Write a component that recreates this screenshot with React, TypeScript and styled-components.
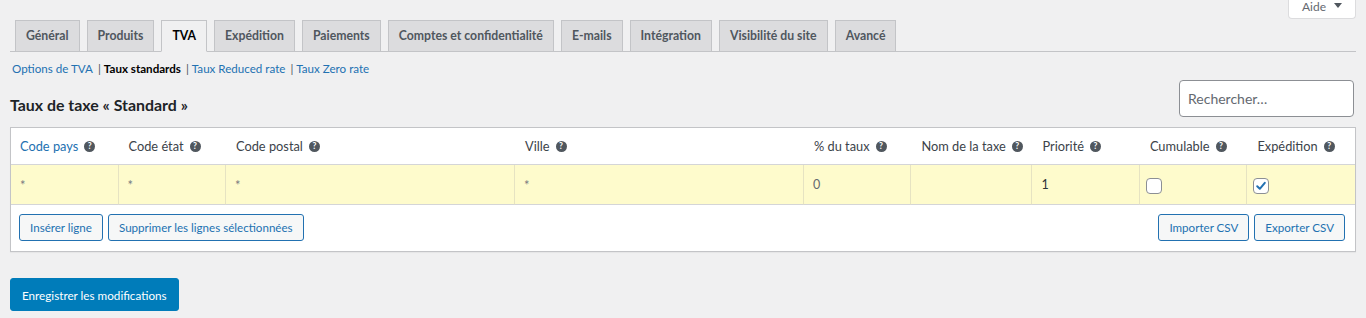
import React from "react";
import styled, { createGlobalStyle } from "styled-components";

const GlobalStyle = createGlobalStyle`
  html, body { margin: 0; padding: 0; background: #f0f0f1; }
  body {
    font-family: Lato, "Noto Sans", sans-serif;
    color: #3c434a;
    font-size: 12px;
  }
  * { box-sizing: border-box; }
`;

const FONT = `Lato, "Noto Sans", sans-serif`;

const Page = styled.div`
  display: flex;
  flex-direction: column;
  padding: 0 10px;
`;

const TopBar = styled.div`
  display: flex;
  justify-content: flex-end;
  height: 20px;
`;

const HelpButton = styled.button`
  display: flex;
  align-items: flex-start;
  justify-content: center;
  gap: 8px;
  width: 68px;
  height: 19px;
  padding: 0;
  background: #fff;
  border: 1px solid #dcdcde;
  border-top: none;
  border-radius: 0 0 4px 4px;
  font-family: ${FONT};
  font-size: 12px;
  line-height: 13px;
  color: #646970;
`;

const Caret = styled.span`
  display: block;
  width: 0;
  height: 0;
  margin-top: 3px;
  border-left: 4px solid transparent;
  border-right: 4px solid transparent;
  border-top: 5px solid #50575e;
`;

const TabBar = styled.nav`
  display: flex;
  align-items: flex-start;
  gap: 7px;
  height: 32px;
  padding-left: 5px;
  border-bottom: 1px solid #c3c4c7;
`;

const Tab = styled.a<{ $active?: boolean }>`
  display: block;
  height: ${(p) => (p.$active ? "32px" : "31px")};
  padding: 5px 10px;
  border: 1px solid #c3c4c7;
  border-bottom: ${(p) => (p.$active ? "1px solid #f0f0f1" : "none")};
  background: ${(p) => (p.$active ? "#f0f0f1" : "#dcdcde")};
  color: ${(p) => (p.$active ? "#000" : "#50575e")};
  font-size: 12.25px;
  font-weight: 700;
  line-height: 20px;
  white-space: nowrap;
  text-decoration: none;
  position: relative;
`;

const SubNav = styled.ul`
  display: flex;
  align-items: center;
  list-style: none;
  margin: 8px 0 0 2px;
  padding: 0;
  height: 18px;
  font-size: 11.6px;
  line-height: 18px;
`;

const SubItem = styled.li`
  display: flex;
  align-items: center;
`;

const SubLink = styled.a<{ $current?: boolean }>`
  color: ${(p) => (p.$current ? "#000" : "#2271b1")};
  font-weight: ${(p) => (p.$current ? 700 : 400)};
  text-decoration: none;
`;

const Sep = styled.span`
  margin: 0 3px 0 5px;
  color: #50575e;
`;

const HeadingRow = styled.div`
  display: flex;
  justify-content: space-between;
  align-items: flex-end;
  margin-top: 2px;
`;

const Title = styled.h2`
  margin: 0 0 2px 0;
  font-size: 15.9px;
  font-weight: 700;
  line-height: 20px;
  color: #1d2327;
`;

const Search = styled.input`
  width: 175px;
  height: 37px;
  margin-right: 2px;
  padding: 0 8px;
  border: 1px solid #8c8f94;
  border-radius: 4px;
  background: #fff;
  font-family: ${FONT};
  font-size: 14px;
  color: #2c3338;
  &::placeholder { color: #646970; }
`;

const Table = styled.table`
  width: 100%;
  margin-top: 10px;
  border-collapse: separate;
  border-spacing: 0;
  border: 1px solid #c3c4c7;
  background: #fff;
  table-layout: fixed;
  box-shadow: 0 1px 1px rgba(0, 0, 0, 0.04);
`;

const Th = styled.th<{ $link?: boolean }>`
  height: 37px;
  padding: 0 10px;
  text-align: left;
  font-weight: 400;
  font-size: 12.8px;
  white-space: nowrap;
  color: ${(p) => (p.$link ? "#2271b1" : "#3c434a")};
  border-bottom: 1px solid #d4d5d7;
  &:first-child { padding-left: 9px; }
`;

const HeadInner = styled.span`
  display: inline-flex;
  align-items: center;
  gap: 6px;
`;

const Help = styled.span`
  display: inline-flex;
  align-items: center;
  justify-content: center;
  width: 11px;
  height: 11px;
  border-radius: 50%;
  background: #50575e;
  color: #fff;
  font-size: 8.5px;
  font-weight: 700;
  line-height: 1;
`;

const Td = styled.td<{ $tone?: "star" | "muted"; $check?: boolean }>`
  height: 40px;
  padding: 0 ${(p) => (p.$check ? "6px" : "9px")};
  background: #fefbcc;
  border-right: 1px solid #e6e3c2;
  border-bottom: 1px solid #d4d5d7;
  font-size: ${(p) => (p.$tone === "star" ? "13px" : "12.5px")};
  color: ${(p) =>
    p.$tone === "star" ? "#787c82" : p.$tone === "muted" ? "#646970" : "#2c3338"};
  &:last-child { border-right: none; }
`;

const Box = styled.span`
  display: flex;
  align-items: center;
  justify-content: center;
  width: 16px;
  height: 16px;
  margin-top: 2px;
  border: 1px solid #8c8f94;
  border-radius: 4px;
  background: #fff;
`;

const FootCell = styled.td`
  padding: 9px 10px 10px 8px;
`;

const FootBar = styled.div`
  display: flex;
  justify-content: space-between;
`;

const BtnGroup = styled.div`
  display: flex;
  gap: 5px;
`;

const Button = styled.button`
  height: 27px;
  padding: 0 10px;
  border: 1px solid #2271b1;
  border-radius: 3px;
  background: #f6f7f7;
  color: #2271b1;
  font-family: ${FONT};
  font-size: 11.6px;
  white-space: nowrap;
`;

const SaveButton = styled.button`
  align-self: flex-start;
  height: 33px;
  margin-top: 26px;
  padding: 0 11px;
  border: 1px solid #007cba;
  border-radius: 3px;
  background: #007cba;
  color: #fff;
  font-family: ${FONT};
  font-size: 11.7px;
`;

const tabs = [
  "Général",
  "Produits",
  "TVA",
  "Expédition",
  "Paiements",
  "Comptes et confidentialité",
  "E-mails",
  "Intégration",
  "Visibilité du site",
  "Avancé",
];

const columns: { label: string; width: string; link?: boolean }[] = [
  { label: "Code pays", width: "8%", link: true },
  { label: "Code état", width: "8%" },
  { label: "Code postal", width: "21.5%" },
  { label: "Ville", width: "21.5%" },
  { label: "% du taux", width: "8%" },
  { label: "Nom de la taxe", width: "9%" },
  { label: "Priorité", width: "8%" },
  { label: "Cumulable", width: "8%" },
  { label: "Expédition", width: "8%" },
];

const Check = ({ checked }: { checked?: boolean }) => (
  <Box>
    {checked && (
      <svg width="12" height="12" viewBox="0 0 12 12">
        <path
          d="M2.2 6.2 L4.8 8.8 L9.8 2.8"
          fill="none"
          stroke="#2271b1"
          strokeWidth="2"
          strokeLinecap="round"
          strokeLinejoin="round"
        />
      </svg>
    )}
  </Box>
);

export default function App() {
  return (
    <>
      <GlobalStyle />
      <Page>
        <TopBar>
          <HelpButton>
            Aide <Caret />
          </HelpButton>
        </TopBar>
        <TabBar>
          {tabs.map((t) => (
            <Tab key={t} $active={t === "TVA"}>
              {t}
            </Tab>
          ))}
        </TabBar>
        <SubNav>
          <SubItem>
            <SubLink>Options de TVA</SubLink>
            <Sep>|</Sep>
          </SubItem>
          <SubItem>
            <SubLink $current>Taux standards</SubLink>
            <Sep>|</Sep>
          </SubItem>
          <SubItem>
            <SubLink>Taux Reduced rate</SubLink>
            <Sep>|</Sep>
          </SubItem>
          <SubItem>
            <SubLink>Taux Zero rate</SubLink>
          </SubItem>
        </SubNav>
        <HeadingRow>
          <Title>Taux de taxe « Standard »</Title>
          <Search placeholder="Rechercher…" />
        </HeadingRow>
        <Table>
          <colgroup>
            {columns.map((c) => (
              <col key={c.label} style={{ width: c.width }} />
            ))}
          </colgroup>
          <thead>
            <tr>
              {columns.map((c) => (
                <Th key={c.label} $link={c.link}>
                  <HeadInner>
                    {c.label}
                    <Help>?</Help>
                  </HeadInner>
                </Th>
              ))}
            </tr>
          </thead>
          <tbody>
            <tr>
              <Td $tone="star">*</Td>
              <Td $tone="star">*</Td>
              <Td $tone="star">*</Td>
              <Td $tone="star">*</Td>
              <Td $tone="muted">0</Td>
              <Td></Td>
              <Td>1</Td>
              <Td $check>
                <Check />
              </Td>
              <Td $check>
                <Check checked />
              </Td>
            </tr>
          </tbody>
          <tfoot>
            <tr>
              <FootCell colSpan={9}>
                <FootBar>
                  <BtnGroup>
                    <Button>Insérer ligne</Button>
                    <Button>Supprimer les lignes sélectionnées</Button>
                  </BtnGroup>
                  <BtnGroup>
                    <Button>Importer CSV</Button>
                    <Button>Exporter CSV</Button>
                  </BtnGroup>
                </FootBar>
              </FootCell>
            </tr>
          </tfoot>
        </Table>
        <SaveButton>Enregistrer les modifications</SaveButton>
      </Page>
    </>
  );
}
